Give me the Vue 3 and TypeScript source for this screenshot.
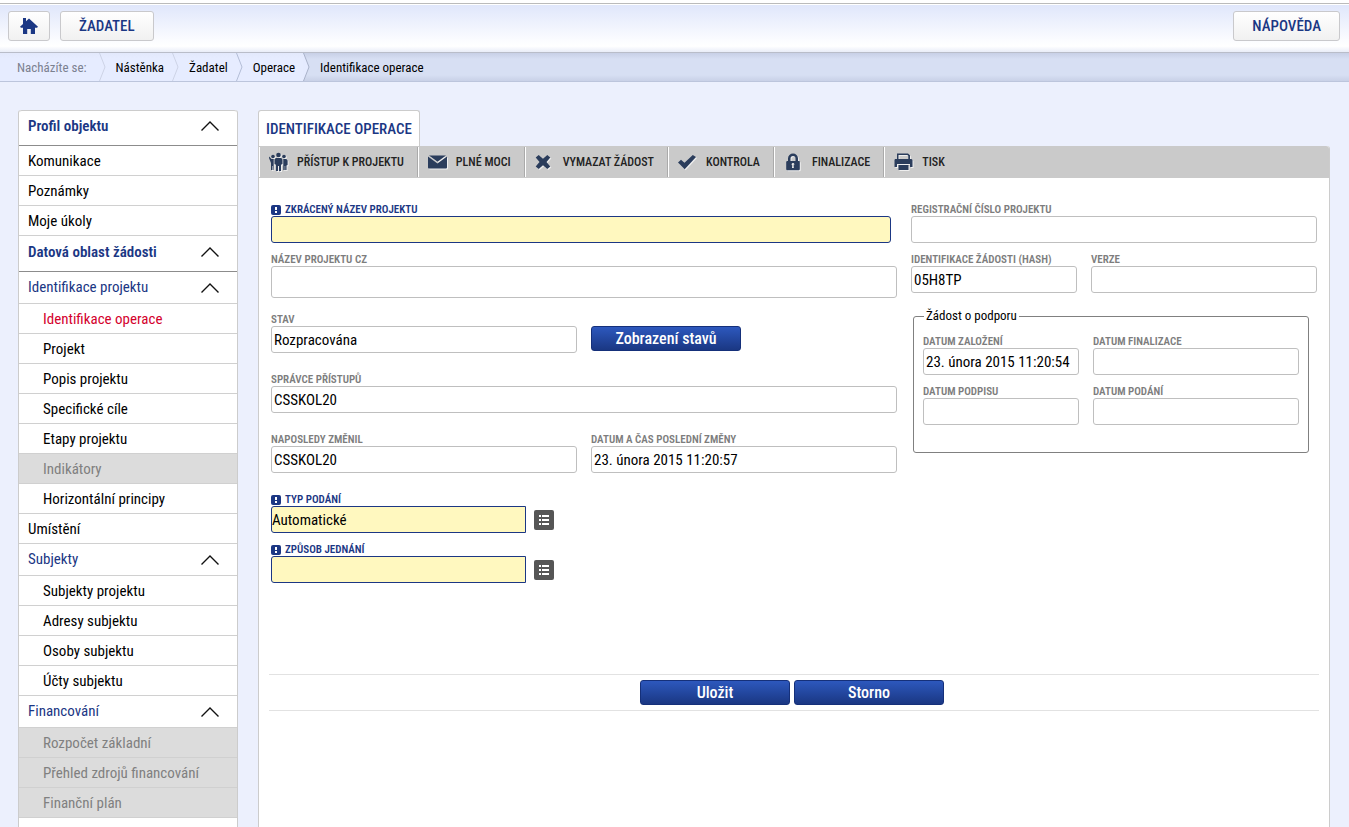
<script setup lang="ts">
import { ref } from 'vue'

type Kind = 'section' | 'group' | 'item' | 'sub'
interface NavEntry {
  kind: Kind
  text: string
  active?: boolean
  disabled?: boolean
}

const nav: NavEntry[] = [
  { kind: 'section', text: 'Profil objektu' },
  { kind: 'item', text: 'Komunikace' },
  { kind: 'item', text: 'Poznámky' },
  { kind: 'item', text: 'Moje úkoly' },
  { kind: 'section', text: 'Datová oblast žádosti' },
  { kind: 'group', text: 'Identifikace projektu' },
  { kind: 'sub', text: 'Identifikace operace', active: true },
  { kind: 'sub', text: 'Projekt' },
  { kind: 'sub', text: 'Popis projektu' },
  { kind: 'sub', text: 'Specifické cíle' },
  { kind: 'sub', text: 'Etapy projektu' },
  { kind: 'sub', text: 'Indikátory', disabled: true },
  { kind: 'sub', text: 'Horizontální principy' },
  { kind: 'item', text: 'Umístění' },
  { kind: 'group', text: 'Subjekty' },
  { kind: 'sub', text: 'Subjekty projektu' },
  { kind: 'sub', text: 'Adresy subjektu' },
  { kind: 'sub', text: 'Osoby subjektu' },
  { kind: 'sub', text: 'Účty subjektu' },
  { kind: 'group', text: 'Financování' },
  { kind: 'sub', text: 'Rozpočet základní', disabled: true },
  { kind: 'sub', text: 'Přehled zdrojů financování', disabled: true },
  { kind: 'sub', text: 'Finanční plán', disabled: true },
  { kind: 'sub', text: 'Veřejné zakázky' },
]

const crumbs = ['Nástěnka', 'Žadatel', 'Operace']

const tools = [
  { icon: 'people', text: 'Přístup k projektu' },
  { icon: 'mail', text: 'Plné moci' },
  { icon: 'cross', text: 'Vymazat žádost' },
  { icon: 'check', text: 'Kontrola' },
  { icon: 'lock', text: 'Finalizace' },
  { icon: 'print', text: 'Tisk' },
]

const shortName = ref('')
const projectName = ref('')
const submissionType = ref('Automatické')
const actingMode = ref('')
</script>

<template>
  <div class="page">
    <header class="top">
      <button class="nav-btn home" type="button" aria-label="Domů">
        <svg width="18" height="16" viewBox="0 0 18 16" aria-hidden="true">
          <path d="M3 0h3v3.300L9 .6 18 8.800l-1 .9h-2V16h-4.200v-5H7.200v5H3V9.700H1L0 8.800 3 6Z" fill="#1b3784" />
        </svg>
      </button>
      <button class="nav-btn" type="button">ŽADATEL</button>
      <button class="nav-btn help" type="button">NÁPOVĚDA</button>
    </header>

    <nav class="crumbs" aria-label="Drobečková navigace">
      <span class="crumb lead">Nacházíte se:</span>
      <template v-for="(c, i) in crumbs" :key="c">
        <svg class="sep" width="7" height="28" viewBox="0 0 7 28" aria-hidden="true">
          <path d="M.5 0 6 14 .5 28" fill="none" :stroke="i === 2 ? '#b3bdd6' : '#cdd3e6'" />
        </svg>
        <a class="crumb" href="#">{{ c }}</a>
      </template>
      <span class="current">
        <svg class="sep" width="7" height="28" viewBox="0 0 7 28" aria-hidden="true">
          <path d="M0 0H.5L6 14 .5 28H0Z" fill="#e5ebff" />
          <path d="M.5 0 6 14 .5 28" fill="none" stroke="#a9b2c9" />
        </svg>
        <span class="crumb">Identifikace operace</span>
      </span>
    </nav>

    <div class="body">
      <aside class="side">
        <template v-for="n in nav" :key="n.text">
          <button v-if="n.kind === 'section' || n.kind === 'group'" type="button" class="row" :class="n.kind">
            {{ n.text }}
            <svg width="18" height="10" viewBox="0 0 18 10" aria-hidden="true">
              <path d="M.5 9.500 9 1l8.500 8.500" fill="none" stroke="#111" stroke-width="1.400" />
            </svg>
          </button>
          <a v-else href="#" class="row" :class="[n.kind, { active: n.active, disabled: n.disabled }]">{{ n.text }}</a>
        </template>
      </aside>

      <main class="main">
        <h1 class="tab">IDENTIFIKACE OPERACE</h1>
        <section class="panel">
          <div class="toolbar">
            <button v-for="t in tools" :key="t.icon" type="button" class="tool">
              <svg width="20" height="20" viewBox="0 0 20 20" aria-hidden="true">
                <g v-if="t.icon === 'people'">
                  <circle cx="4" cy="4.500" r="1.800" />
                  <circle cx="9.500" cy="3" r="2.300" />
                  <circle cx="15" cy="4.500" r="1.800" />
                  <path d="M.2 4.500 2.500 7h2.200V13l-.2 5H3.800v-4h-.5v4H2v-7L0 6Z" />
                  <path d="M6.800 6h5.400l1.300 1.600V12l-1.500.8V19h-2v-5H9v5H7v-6.200L5.500 12V7.600Z" />
                  <path d="M14.300 7h3L18.600 8.500V13l-1.100.4V18h-1.300v-4h-.5v4h-1.400Z" />
                </g>
                <g v-else-if="t.icon === 'mail'">
                  <path d="M1 3.500h17L9.500 9.800Z" />
                  <path d="M0 4.500 9.500 11.500l9.500-7V15.500a1 1 0 0 1-1 1H1a1 1 0 0 1-1-1Z" />
                </g>
                <path
                  v-else-if="t.icon === 'cross'"
                  transform="translate(-2)"
                  d="M5.700 3 10 6.800 14.300 3 17.300 5.600 13.500 10l3.800 4.400-3 2.600L10 13.200 5.700 17l-3-2.600L6.500 10 2.700 5.600Z"
                />
                <path
                  v-else-if="t.icon === 'check'"
                  transform="translate(-1)"
                  d="m1 10.500 3-2.800L7.500 10.800 15.800 3l3.200 2L7.700 17.200Z"
                />
                <path
                  v-else-if="t.icon === 'lock'"
                  transform="translate(-1)"
                  fill-rule="evenodd"
                  d="M5 9V6.500a5 5 0 0 1 10 0V9h1a.8.8 0 0 1 .8.800v7.700l-.8.800H4l-.8-.8V9.800L4 9Zm2.500 0h5V6.500a2.500 2.500 0 0 0-5 0ZM10 11a1.400 1.400 0 0 0-.7 2.600L9 16h2l-.3-2.400A1.400 1.400 0 0 0 10 11Z"
                />
                <g v-else>
                  <path fill-rule="evenodd" d="M3 1.500h11l2 1.800V8H3ZM4.500 3v4h9.800V4l-.9-1Z" />
                  <path d="M1 7h16.500l1 1v7H16v-3H3v3H.500V8Z" />
                  <path d="M4.500 13h10v5h-10Z" />
                </g>
              </svg>
              {{ t.text.toUpperCase() }}
            </button>
          </div>

          <form class="form" @submit.prevent>
            <div class="left">
              <div class="field wide short required">
                <label for="f-short"><i class="mark" aria-hidden="true"></i>ZKRÁCENÝ NÁZEV PROJEKTU</label>
                <input id="f-short" v-model="shortName" type="text" />
              </div>
              <div class="field wide">
                <label for="f-name">NÁZEV PROJEKTU CZ</label>
                <textarea id="f-name" v-model="projectName" rows="1"></textarea>
              </div>
              <div class="field">
                <label for="f-state">STAV</label>
                <input id="f-state" type="text" value="Rozpracována" readonly />
              </div>
              <div class="aside-action">
                <button type="button" class="btn">Zobrazení stavů</button>
              </div>
              <div class="field wide">
                <label for="f-admin">SPRÁVCE PŘÍSTUPŮ</label>
                <input id="f-admin" type="text" value="CSSKOL20" readonly />
              </div>
              <div class="field">
                <label for="f-editor">NAPOSLEDY ZMĚNIL</label>
                <input id="f-editor" type="text" value="CSSKOL20" readonly />
              </div>
              <div class="field">
                <label for="f-changed">DATUM A ČAS POSLEDNÍ ZMĚNY</label>
                <input id="f-changed" type="text" value="23. února 2015 11:20:57" readonly />
              </div>
              <div class="lookups">
                <div class="field required">
                  <label for="f-type"><i class="mark" aria-hidden="true"></i>TYP PODÁNÍ</label>
                  <div class="pick">
                    <input id="f-type" v-model="submissionType" type="text" />
                    <button type="button" class="list" aria-label="Vybrat typ podání">
                      <svg width="12" height="12" viewBox="0 0 12 12" aria-hidden="true">
                        <path d="M1 1h2v2H1zM4 1h7v2H4zM1 5h2v2H1zM4 5h7v2H4zM1 9h2v2H1zM4 9h7v2H4z" fill="#fff" />
                      </svg>
                    </button>
                  </div>
                </div>
                <div class="field required">
                  <label for="f-mode"><i class="mark" aria-hidden="true"></i>ZPŮSOB JEDNÁNÍ</label>
                  <div class="pick">
                    <input id="f-mode" v-model="actingMode" type="text" />
                    <button type="button" class="list" aria-label="Vybrat způsob jednání">
                      <svg width="12" height="12" viewBox="0 0 12 12" aria-hidden="true">
                        <path d="M1 1h2v2H1zM4 1h7v2H4zM1 5h2v2H1zM4 5h7v2H4zM1 9h2v2H1zM4 9h7v2H4z" fill="#fff" />
                      </svg>
                    </button>
                  </div>
                </div>
              </div>
            </div>

            <div class="right">
              <div class="field wide">
                <label for="f-reg">REGISTRAČNÍ ČÍSLO PROJEKTU</label>
                <input id="f-reg" type="text" readonly />
              </div>
              <div class="field">
                <label for="f-hash">IDENTIFIKACE ŽÁDOSTI (HASH)</label>
                <input id="f-hash" type="text" value="05H8TP" readonly />
              </div>
              <div class="field">
                <label for="f-ver">VERZE</label>
                <input id="f-ver" type="text" readonly />
              </div>
              <fieldset class="support">
                <legend>Žádost o podporu</legend>
                <div class="dates">
                  <div class="field">
                    <label for="f-created">DATUM ZALOŽENÍ</label>
                    <input id="f-created" type="text" value="23. února 2015 11:20:54" readonly />
                  </div>
                  <div class="field">
                    <label for="f-final">DATUM FINALIZACE</label>
                    <input id="f-final" type="text" readonly />
                  </div>
                  <div class="field">
                    <label for="f-signed">DATUM PODPISU</label>
                    <input id="f-signed" type="text" readonly />
                  </div>
                  <div class="field">
                    <label for="f-sent">DATUM PODÁNÍ</label>
                    <input id="f-sent" type="text" readonly />
                  </div>
                </div>
              </fieldset>
            </div>

            <div class="actions">
              <button type="submit" class="btn">Uložit</button>
              <button type="reset" class="btn">Storno</button>
            </div>
          </form>
        </section>
      </main>
    </div>
  </div>
</template>

<style>
html,
body {
  background: #ecf0fd;
}
</style>

<style scoped>
.page,
.page * {
  box-sizing: border-box;
}
.page {
  display: flex;
  flex-direction: column;
  height: 100vh;
  overflow: hidden;
  background: #ecf0fd;
  font-family: "Roboto Condensed", Roboto, sans-serif;
  font-size: 15px;
  line-height: 20px;
  color: #000;
}
button,
input,
textarea {
  font: inherit;
  color: inherit;
  margin: 0;
}
button {
  cursor: pointer;
}
a {
  color: inherit;
  text-decoration: none;
}

.top {
  flex: none;
  display: flex;
  gap: 10px;
  height: 49px;
  margin-top: 3px;
  padding: 7px 9px 0 8px;
  border-top: 1px solid #bbb;
  box-shadow: inset 0 1px #fff, 0 -3px #fff;
  background: linear-gradient(#dfe6fb, #fbfcff 75%, #fff 88%, #e9edf8);
}
.nav-btn {
  height: 30px;
  padding: 0 18px;
  border: 1px solid #c9c9cc;
  border-radius: 3px;
  background: linear-gradient(#fff, #f1f1f1);
  color: #1b3784;
  font-weight: 500;
}
.home {
  display: flex;
  align-items: center;
  justify-content: center;
  width: 42px;
  padding: 0;
}
.help {
  margin-left: auto;
}

.crumbs {
  flex: none;
  display: flex;
  align-items: stretch;
  height: 30px;
  border-top: 1px solid #b9bdc9;
  border-bottom: 1px solid #bcc5dc;
  background: linear-gradient(#e3e9fc, #e6ecff 20%, #e6ecff);
  font-size: 13px;
  line-height: 29px;
  white-space: nowrap;
}
.crumb {
  padding: 0 8px 0 10px;
}
.lead {
  padding: 0 12px 0 17px;
  color: #7b8190;
}
.sep {
  flex: none;
  display: block;
}
.current {
  flex: 1;
  display: flex;
  background: linear-gradient(#c8d0e6, #d7dff3 6px, #d7dff3 22px, #c9d1e7);
}

.body {
  flex: 1;
  min-height: 0;
  display: flex;
  gap: 20px;
  padding: 28px 19px 0 18px;
}
.side {
  flex: none;
  width: 220px;
  border: solid #ccc;
  border-width: 0 1px;
  border-radius: 3px 3px 0 0;
  background: #fff;
}
.row {
  display: flex;
  align-items: center;
  width: 100%;
  height: 30px;
  padding: 1px 0 0 9px;
  border: 0;
  border-bottom: 1px solid #d0d0d0;
  background: #fff;
  text-align: left;
}
.section,
.group {
  justify-content: space-between;
  padding: 0 18px 1px 9px;
  color: #1b3784;
}
.section {
  height: 36px;
  padding-bottom: 4px;
  border-bottom-color: #8c8c8c;
  font-weight: 600;
}
.section:first-child {
  border-top: 1px solid #ccc;
  border-radius: 3px 3px 0 0;
}
.group {
  height: 32px;
}
.group svg {
  margin-top: 2px;
}
.sub {
  padding-left: 24px;
}
.active {
  color: #d4002d;
}
.disabled {
  background: #dcdcdc;
  color: #808080;
}

.main {
  flex: 1;
  min-width: 0;
  display: flex;
  flex-direction: column;
}
.tab {
  flex: none;
  align-self: flex-start;
  height: 36px;
  margin: 0;
  padding: 0 7px;
  border: 1px solid #ccc;
  border-bottom: 0;
  border-radius: 3px 3px 0 0;
  background: #fff;
  color: #1b3784;
  font-size: 15px;
  font-weight: 500;
  line-height: 36px;
}
.panel {
  flex: 1;
  border: solid #ccc;
  border-width: 0 1px;
  border-radius: 0 3px 0 0;
  background: #fff;
}
.toolbar {
  display: flex;
  height: 32px;
  padding: 1px 0;
  border-radius: 0 3px 0 0;
  background: #cacaca;
}
.tool {
  display: flex;
  align-items: center;
  gap: 8px;
  padding: 0 13px 0 9px;
  border: 0;
  border-left: 1px solid #fff;
  border-right: 1px solid #aaa;
  background: none;
  color: #222;
  font-size: 12px;
  font-weight: 500;
  white-space: nowrap;
}
.tool:last-child {
  border-right: 0;
}
.tool svg {
  flex: none;
  fill: #2b3d5c;
  filter: drop-shadow(1px 1px 0 #eee);
}

.form {
  display: grid;
  grid-template-columns: 626fr 406fr;
  column-gap: 14px;
  padding: 25px 12px 0;
}
.left,
.right {
  display: grid;
  column-gap: 14px;
  align-content: start;
}
.left {
  grid-template-columns: 1fr 1fr;
  row-gap: 20px;
}
.right {
  grid-template-columns: 166fr 226fr;
  row-gap: 10px;
}
.wide {
  grid-column: 1 / -1;
}
.field {
  display: flex;
  flex-direction: column;
  min-width: 0;
}
.field label {
  height: 13px;
  color: #7d7d7d;
  font-size: 11px;
  font-weight: 600;
  line-height: 13px;
  white-space: nowrap;
}
.field input,
.field textarea {
  display: block;
  width: 100%;
  height: 27px;
  padding: 0 2px;
  border: 1px solid #bfbfbf;
  border-radius: 3px;
  background: #fff;
  resize: none;
}
.field textarea {
  height: 32px;
  margin-bottom: -5px;
  padding: 5px 2px;
}
.required label {
  display: flex;
  align-items: center;
  gap: 4px;
  color: #1b3784;
}
.required input {
  border-color: #1b3784;
  background: #fff8bf;
}
.mark {
  display: flex;
  flex-direction: column;
  align-items: center;
  justify-content: center;
  gap: 1px;
  width: 10px;
  height: 10px;
  border-radius: 2px;
  background: #1b3784;
}
.mark::before,
.mark::after {
  content: "";
  width: 2px;
  height: 3px;
  background: #fff;
}
.mark::after {
  height: 2px;
}
.short {
  padding-right: 6px;
  margin-bottom: -10px;
}
.aside-action {
  padding-top: 13px;
}
.lookups {
  grid-column: 1 / -1;
  display: grid;
  row-gap: 10px;
}
.pick {
  display: flex;
  align-items: center;
  gap: 8px;
}
.field .pick input {
  width: 255px;
  padding: 0;
  border-radius: 3px 0 0 3px;
}
.list {
  display: flex;
  align-items: center;
  justify-content: center;
  width: 20px;
  height: 20px;
  padding: 0;
  border: 0;
  border-radius: 2px;
  background: #555;
}

.support {
  grid-column: 1 / -1;
  min-width: 0;
  margin: 4px 8px 0 2px;
  padding: 10px 9px 27px;
  border: 1px solid #808080;
  border-radius: 3px;
}
.support legend {
  margin-left: 1px;
  padding: 0 2px;
  font-size: 13px;
  line-height: 18px;
}
.dates {
  display: grid;
  grid-template-columns: 156fr 206fr;
  gap: 10px 14px;
}

.btn {
  width: 150px;
  height: 25px;
  padding: 0;
  border: 1px solid #15307a;
  border-radius: 3px;
  background: linear-gradient(#2d58bd, #1a3783);
  color: #fff;
  font-size: 16px;
  font-weight: 500;
  line-height: 24px;
}
.actions {
  grid-column: 1 / -1;
  display: flex;
  justify-content: center;
  gap: 4px;
  margin: 91px -2px 0;
  padding: 5px 4px 5px 0;
  border: solid #e2e2e2;
  border-width: 1px 0;
}
</style>
